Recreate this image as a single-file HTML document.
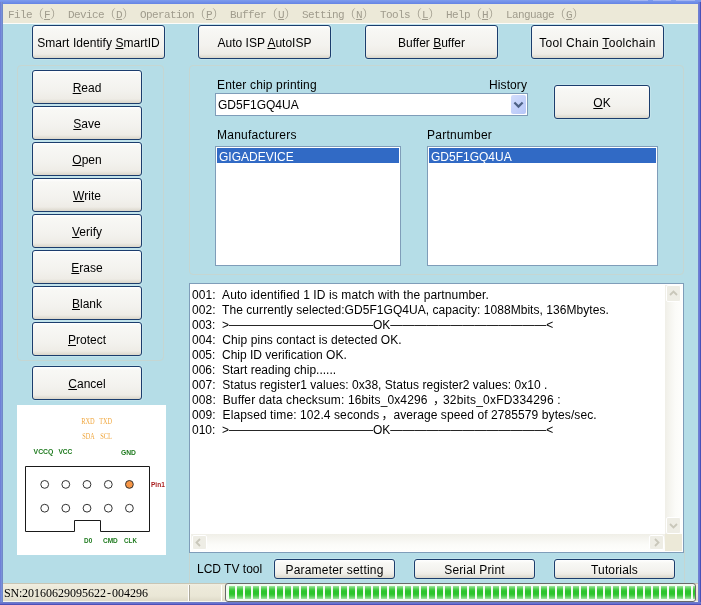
<!DOCTYPE html>
<html><head><meta charset="utf-8">
<style>
html,body{margin:0;padding:0;}
body{width:701px;height:605px;overflow:hidden;position:relative;background:#6C7CD8;font-family:"Liberation Sans",sans-serif;font-size:12px;color:#000;}
div,span{box-sizing:border-box;}
.a{position:absolute;}
#ftop{left:0;top:0;width:701px;height:4px;background:linear-gradient(#7E9CEE,#6584E4);}
#fl{left:0;top:2px;width:3px;height:603px;background:linear-gradient(90deg,#6F80D8 0,#6F80D8 1px,#7890D8 1px,#7890D8 2px,#7088C8 2px);}
#fr{left:698px;top:2px;width:3px;height:603px;background:linear-gradient(90deg,#6F80D0 0,#6F80D0 1px,#6878D8 1px,#6878D8 2px,#4850B8 2px);}
#fb{left:0;top:602px;width:701px;height:3px;background:linear-gradient(#6C7CC8 0,#6C7CC8 1px,#6870D0 1px,#6870D0 2px,#4C50B8 2px);}
#client{left:3px;top:23px;width:695px;height:560px;background:#B5DDE7;border-top:1px solid #FCFCFA;}
#menu{left:3px;top:4px;width:695px;height:19px;background:#ECE9D8;color:#A09C8D;}
#menu span{position:absolute;top:4px;height:14px;line-height:14px;font-family:"Liberation Mono","Noto Serif CJK SC",monospace;font-size:11px;letter-spacing:-0.6px;white-space:pre;}
#menu span i{font-style:normal;font-family:"Noto Serif CJK SC","Noto Sans CJK SC",serif;font-size:12px;letter-spacing:0;line-height:0;position:relative;top:1px;}
.btn{position:absolute;border:1px solid #1B3D6D;border-radius:3px;background:linear-gradient(#FFFFFF 0,#F8F8F5 3px,#F3F2EE 60%,#EEECE6 calc(100% - 4px),#DAD6CA 100%);text-align:center;font-size:12px;white-space:nowrap;box-shadow:0 0 0 1px rgba(255,255,255,0.18);}
.b34{height:34px;line-height:35px;}
.b20{height:20px;line-height:21px;}
.grp{position:absolute;border:1px solid #C5D6D2;border-radius:4px;}
.lb{position:absolute;border:1px solid #7F9DB9;background:#fff;}
.sel{position:absolute;left:1px;top:1px;right:1px;height:15px;background:#316AC5;color:#fff;line-height:15px;padding-left:2px;padding-top:2px;white-space:nowrap;}
.lbl{position:absolute;white-space:nowrap;line-height:14px;height:14px;}
#status{left:3px;top:583px;width:695px;height:19px;background:linear-gradient(#C8C5B4 0,#C8C5B4 1px,#F0EEE1 1px,#EDEADA 4px,#EAE7D6 13px,#DEDAC8 18px,#F5F5F0 18px);}
#prog{left:222px;top:0px;width:471px;height:19px;border:1px solid #686868;border-radius:3px;background:#F2FBF0;}
#blocks{position:absolute;left:3px;top:2px;width:466px;height:13px;background:repeating-linear-gradient(90deg,#2DC52D 0,#2DC52D 6px,#F2FBF0 6px,#F2FBF0 8px);}
#blocks:after{content:"";position:absolute;left:0;top:0;right:0;bottom:0;background:linear-gradient(rgba(255,255,255,0.55) 0,rgba(255,255,255,0.15) 3px,rgba(255,255,255,0) 5px,rgba(255,255,255,0) 8px,rgba(255,255,255,0.15) 10px,rgba(255,255,255,0.55) 13px);}
#log{left:189px;top:283px;width:495px;height:270px;border:1px solid #7F9DB9;background:#fff;}
.sbb{position:absolute;width:15px;height:15px;border:1px solid #fff;border-radius:2px;background:#EEEDE5;}
.sbb svg{position:absolute;left:-1px;top:-1px;}
.cm{display:inline-block;width:12px;padding-left:2px;letter-spacing:0;}
#log div.t{position:absolute;left:2px;height:15px;line-height:15px;white-space:pre;font-family:"Liberation Sans","Noto Sans CJK SC",sans-serif;font-size:12px;}
</style></head><body><div id="wrap" style="position:absolute;left:0;top:0;width:701px;height:605px;will-change:transform;">
<div class="a" id="ftop"></div><div class="a" id="fl"></div><div class="a" id="fr"></div><div class="a" id="fb"></div>
<div class="a" style="left:630px;top:0;width:18px;height:1px;background:#A2B4F2"></div><div class="a" style="left:653px;top:0;width:18px;height:1px;background:#A2B4F2"></div><div class="a" style="left:676px;top:0;width:19px;height:1px;background:#A2B4F2"></div>
<div class="a" id="menu">
<span style="left:5px">File<i>（</i><u>F</u><i>）</i></span>
<span style="left:65px">Device<i>（</i><u>D</u><i>）</i></span>
<span style="left:137px">Operation<i>（</i><u>P</u><i>）</i></span>
<span style="left:227px">Buffer<i>（</i><u>U</u><i>）</i></span>
<span style="left:299px">Setting<i>（</i><u>N</u><i>）</i></span>
<span style="left:377px">Tools<i>（</i><u>L</u><i>）</i></span>
<span style="left:443px">Help<i>（</i><u>H</u><i>）</i></span>
<span style="left:503px">Language<i>（</i><u>G</u><i>）</i></span>
</div>
<div class="a" id="client"></div>

<div class="btn b34" style="left:32px;top:25px;width:133px;letter-spacing:0.05px">Smart Identify <u>S</u>martID</div>
<div class="btn b34" style="left:198px;top:25px;width:133px;">Auto ISP <u>A</u>utoISP</div>
<div class="btn b34" style="left:365px;top:25px;width:133px;">Buffer <u>B</u>uffer</div>
<div class="btn b34" style="left:531px;top:25px;width:133px;letter-spacing:0.3px">Tool Chain <u>T</u>oolchain</div>

<div class="grp" style="left:17px;top:65px;width:147px;height:296px;"></div>
<div class="btn b34" style="left:32px;top:70px;width:110px;"><u>R</u>ead</div>
<div class="btn b34" style="left:32px;top:106px;width:110px;"><u>S</u>ave</div>
<div class="btn b34" style="left:32px;top:142px;width:110px;"><u>O</u>pen</div>
<div class="btn b34" style="left:32px;top:178px;width:110px;"><u>W</u>rite</div>
<div class="btn b34" style="left:32px;top:214px;width:110px;"><u>V</u>erify</div>
<div class="btn b34" style="left:32px;top:250px;width:110px;"><u>E</u>rase</div>
<div class="btn b34" style="left:32px;top:286px;width:110px;"><u>B</u>lank</div>
<div class="btn b34" style="left:32px;top:322px;width:110px;"><u>P</u>rotect</div>
<div class="btn b34" style="left:32px;top:366px;width:110px;"><u>C</u>ancel</div>


<svg class="a" style="left:17px;top:405px" width="149" height="150" viewBox="0 0 149 150">
<rect width="149" height="150" fill="#fff"/>
<path d="M8.5 61.5 H132.5 V126.5 H83.5 V115.5 H57.5 V126.5 H8.5 Z" fill="none" stroke="#1a1a1a" stroke-width="1"/>
<circle cx="27.7" cy="79.4" r="3.9" fill="#fff" stroke="#333" stroke-width="1"/><circle cx="48.8" cy="79.4" r="3.9" fill="#fff" stroke="#333" stroke-width="1"/><circle cx="70.0" cy="79.4" r="3.9" fill="#fff" stroke="#333" stroke-width="1"/><circle cx="91.3" cy="79.4" r="3.9" fill="#fff" stroke="#333" stroke-width="1"/><circle cx="112.4" cy="79.4" r="3.9" fill="#F79646" stroke="#333" stroke-width="1"/><circle cx="27.7" cy="103.2" r="3.9" fill="#fff" stroke="#333" stroke-width="1"/><circle cx="48.8" cy="103.2" r="3.9" fill="#fff" stroke="#333" stroke-width="1"/><circle cx="70.0" cy="103.2" r="3.9" fill="#fff" stroke="#333" stroke-width="1"/><circle cx="91.3" cy="103.2" r="3.9" fill="#fff" stroke="#333" stroke-width="1"/><circle cx="112.4" cy="103.2" r="3.9" fill="#fff" stroke="#333" stroke-width="1"/>
<g font-family="Liberation Serif,serif" font-size="7.3px" fill="#F0A63C">
<text x="64.2" y="19.3" textLength="13.5" lengthAdjust="spacingAndGlyphs">RXD</text>
<text x="82.2" y="19.3" textLength="12.8" lengthAdjust="spacingAndGlyphs">TXD</text>
<text x="65.3" y="33.8" textLength="12.4" lengthAdjust="spacingAndGlyphs">SDA</text>
<text x="83.2" y="33.8" textLength="11.8" lengthAdjust="spacingAndGlyphs">SCL</text>
</g>
<g font-family="Liberation Sans,sans-serif" font-size="7px" font-weight="bold" fill="#1E7A1E">
<text x="16.6" y="49.4" textLength="19.8" lengthAdjust="spacingAndGlyphs">VCCQ</text>
<text x="41.4" y="49.4" textLength="14" lengthAdjust="spacingAndGlyphs">VCC</text>
<text x="104" y="49.8" textLength="15" lengthAdjust="spacingAndGlyphs">GND</text>
<text x="67" y="138.2" textLength="8.2" lengthAdjust="spacingAndGlyphs">D0</text>
<text x="86" y="138.2" textLength="14.8" lengthAdjust="spacingAndGlyphs">CMD</text>
<text x="107.1" y="138.2" textLength="12.8" lengthAdjust="spacingAndGlyphs">CLK</text>
<text x="134" y="81.8" textLength="13.8" lengthAdjust="spacingAndGlyphs" fill="#A81C1C">Pin1</text>
</g>
</svg>
<div class="grp" style="left:189px;top:65px;width:495px;height:210px;"></div>
<div class="grp" style="left:189px;top:550px;width:496px;height:33px;border-top:none;border-bottom:none;border-radius:0"></div>
<div class="lbl" style="left:217px;top:78px;letter-spacing:0.16px">Enter chip printing</div>
<div class="lbl" style="left:489px;top:78px;letter-spacing:0.1px">History</div>
<div class="lb" style="left:215px;top:93px;width:313px;height:23px;"><div class="lbl" style="left:2px;top:4px;">GD5F1GQ4UA</div>
<div class="a" style="left:295px;top:1px;width:15px;height:19px;border-radius:2px;background:linear-gradient(135deg,#D2DDFC,#B6C6F8);"><svg class="a" style="left:0;top:0" width="15" height="19" viewBox="0 0 15 19"><path d="M3.4 7.5 L7.5 11.6 L11.6 7.5" fill="none" stroke="#4D6185" stroke-width="2.2"/></svg></div></div>
<div class="btn b34" style="left:554px;top:85px;width:96px;"><u>O</u>K</div>
<div class="lbl" style="left:217px;top:128px;letter-spacing:0.23px">Manufacturers</div>
<div class="lbl" style="left:427px;top:128px;letter-spacing:0.24px">Partnumber</div>
<div class="lb" style="left:215px;top:146px;width:186px;height:120px;"><div class="sel">GIGADEVICE</div></div>
<div class="lb" style="left:427px;top:146px;width:231px;height:120px;"><div class="sel">GD5F1GQ4UA</div></div>

<div class="a" id="log">

<div class="a" style="left:475px;top:1px;width:17px;height:249px;background:linear-gradient(90deg,#F0EFE8,#FBFBF8 60%,#FEFEFC);"></div>
<div class="a" style="left:1px;top:250px;width:474px;height:17px;background:linear-gradient(#F0EFE8,#FBFBF8 60%,#FEFEFC);"></div>
<div class="a" style="left:475px;top:250px;width:17px;height:17px;background:#ECE9D8;"></div>
<div class="sbb" style="left:476px;top:1px;height:17px"><svg width="15" height="15" viewBox="0 0 15 15" style="top:0"><path d="M4 9 L7.5 5.5 L11 9" fill="none" stroke="#C9C7BA" stroke-width="1.8"/></svg></div>
<div class="sbb" style="left:476px;top:233px;height:17px"><svg width="15" height="15" viewBox="0 0 15 15" style="top:0"><path d="M4 6 L7.5 9.5 L11 6" fill="none" stroke="#C9C7BA" stroke-width="1.8"/></svg></div>
<div class="sbb" style="left:2px;top:251px;"><svg width="15" height="15" viewBox="0 0 15 15" style="left:-2px"><path d="M9 4 L5.5 7.5 L9 11" fill="none" stroke="#C9C7BA" stroke-width="1.8"/></svg></div>
<div class="sbb" style="left:459px;top:251px;"><svg width="15" height="15" viewBox="0 0 15 15"><path d="M6 4 L9.5 7.5 L6 11" fill="none" stroke="#C9C7BA" stroke-width="1.8"/></svg></div>
<div class="t" style="top:4px;letter-spacing:0.109px">001:  Auto identified 1 ID is match with the partnumber.</div>
<div class="t" style="top:19px;letter-spacing:0.049px">002:  The currently selected:GD5F1GQ4UA, capacity: 1088Mbits, 136Mbytes.</div>
<div class="t" style="top:34px">003:  &gt;————————————OK—————————————&lt;</div>
<div class="t" style="top:49px;letter-spacing:0.058px">004:  Chip pins contact is detected OK.</div>
<div class="t" style="top:64px">005:  Chip ID verification OK.</div>
<div class="t" style="top:79px">006:  Start reading chip......</div>
<div class="t" style="top:94px;letter-spacing:0.0375px">007:  Status register1 values: 0x38, Status register2 values: 0x10 .</div>
<div class="t" style="top:109px;letter-spacing:0.12px">008:  Buffer data checksum: 16bits_0x4296 <span class="cm">，</span><span style="letter-spacing:0.2px">32bits_0xFD334296 :</span></div>
<div class="t" style="top:124px;letter-spacing:0.1px">009:  Elapsed time: 102.4 seconds<span class="cm" style="width:14px">，</span><span style="letter-spacing:0.09px">average speed of 2785579 bytes/sec.</span></div>
<div class="t" style="top:139px">010:  &gt;————————————OK—————————————&lt;</div>
</div>

<div class="lbl" style="left:197px;top:562px;">LCD TV tool</div>
<div class="btn b20" style="left:274px;top:559px;width:121px;letter-spacing:0.2px">Parameter setting</div>
<div class="btn b20" style="left:414px;top:559px;width:121px;letter-spacing:0.15px">Serial Print</div>
<div class="btn b20" style="left:554px;top:559px;width:121px;letter-spacing:0.15px">Tutorials</div>


<div class="a" id="status">
<div class="a" style="left:1px;top:3px;height:14px;line-height:14px;white-space:pre;font-family:'Liberation Serif',serif;font-size:12px;"><span style="letter-spacing:-0.22px">SN:</span>20160629095622<span style="letter-spacing:1px;margin-left:1px">-</span>004296</div>
<div class="a" style="left:185px;top:2px;width:1px;height:16px;background:#fff;"></div>
<div class="a" style="left:186px;top:2px;width:1px;height:16px;background:#ACA899;"></div>
<div class="a" style="left:218px;top:2px;width:1px;height:16px;background:#fff;"></div>
<div class="a" id="prog"><div id="blocks"></div></div>
</div>
</div></body></html>
